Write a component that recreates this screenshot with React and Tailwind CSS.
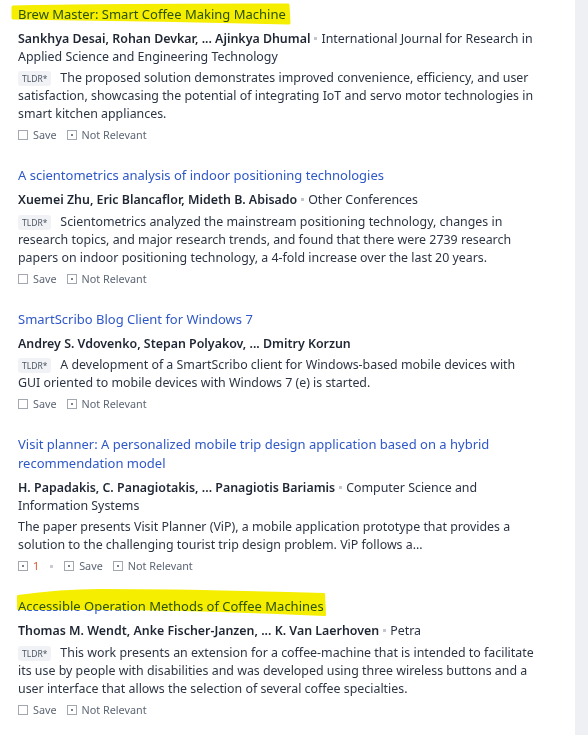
import React from "react";

const papers = [
  {
    title: "Brew Master: Smart Coffee Making Machine",
    authors: "Sankhya Desai, Rohan Devkar, ... Ajinkya Dhumal",
    venue: "International Journal for Research in Applied Science and Engineering Technology",
    tldr: true,
    summary:
      "The proposed solution demonstrates improved convenience, efficiency, and user satisfaction, showcasing the potential of integrating IoT and servo motor technologies in smart kitchen appliances.",
    mark: "a",
  },
  {
    title: "A scientometrics analysis of indoor positioning technologies",
    authors: "Xuemei Zhu, Eric Blancaflor, Mideth B. Abisado",
    venue: "Other Conferences",
    tldr: true,
    summary:
      "Scientometrics analyzed the mainstream positioning technology, changes in research topics, and major research trends, and found that there were 2739 research papers on indoor positioning technology, a 4-fold increase over the last 20 years.",
  },
  {
    title: "SmartScribo Blog Client for Windows 7",
    authors: "Andrey S. Vdovenko, Stepan Polyakov, ... Dmitry Korzun",
    tldr: true,
    summary:
      "A development of a SmartScribo client for Windows-based mobile devices with GUI oriented to mobile devices with Windows 7 (e) is started.",
  },
  {
    title:
      "Visit planner: A personalized mobile trip design application based on a hybrid recommendation model",
    authors: "H. Papadakis, C. Panagiotakis, ... Panagiotis Bariamis",
    venue: "Computer Science and Information Systems",
    tldr: false,
    summary:
      "The paper presents Visit Planner (ViP), a mobile application prototype that provides a solution to the challenging tourist trip design problem. ViP follows a...",
    cites: 1,
  },
  {
    title: "Accessible Operation Methods of Coffee Machines",
    authors: "Thomas M. Wendt, Anke Fischer-Janzen, ... K. Van Laerhoven",
    venue: "Petra",
    tldr: true,
    summary:
      "This work presents an extension for a coffee-machine that is intended to facilitate its use by people with disabilities and was developed using three wireless buttons and a user interface that allows the selection of several coffee specialties.",
    mark: "b",
  },
];

function Box({ dot }) {
  return (
    <span className="inline-flex h-[10px] w-[10px] shrink-0 items-center justify-center border border-[#a3a8b0] bg-white">
      {dot && <span className="h-[2px] w-[2px] bg-[#7b8088]" />}
    </span>
  );
}

// Yellow marker stroke drawn behind the first highlighted title
function MarkA() {
  return (
    <svg
      className="pointer-events-none absolute left-[-8px] top-[-8px]"
      width="290"
      height="32"
      viewBox="0 0 290 32"
    >
      <path
        d="M3 10 C90 8 190 8 278 8 L279 26 C190 24 90 22 3 21 Z"
        fill="#f5ee00"
        stroke="#f5ee00"
        strokeWidth="3"
        strokeLinejoin="round"
      />
    </svg>
  );
}

// Yellow marker stroke drawn behind the last highlighted title
function MarkB() {
  return (
    <svg
      className="pointer-events-none absolute left-[-2px] top-[-10px]"
      width="314"
      height="34"
      viewBox="0 0 314 34"
    >
      <path
        d="M2 9 C30 5 60 3 84 3 C160 3 240 5 308 7 L309 28 C240 25 160 22 84 22 C50 22 25 22 2 22 Z"
        fill="#f5ee00"
        stroke="#f5ee00"
        strokeWidth="2"
        strokeLinejoin="round"
      />
    </svg>
  );
}

function Paper({ p }) {
  return (
    <div className="pb-[23px]">
      <div className="relative">
        {p.mark === "a" && <MarkA />}
        {p.mark === "b" && <MarkB />}
        <a className="relative block text-[13px] leading-[19px] text-[#2f58c8] mix-blend-multiply">
          {p.title}
        </a>
      </div>
      <div className="mt-[6px] text-[12.4px] leading-[17.5px] text-[#2a3344]">
        <span className="font-semibold text-[#1f2633]">{p.authors}</span>
        {p.venue && (
          <>
            <span className="mx-[4px] inline-block h-[3px] w-[3px] translate-y-[-3px] bg-[#c3c7cd]" />
            <span>{p.venue}</span>
          </>
        )}
      </div>
      <p className="mt-[4px] text-[12.4px] leading-[18px] text-[#2d3544]">
        {p.tldr && (
          <span className="mr-[9px] inline-block rounded-[3px] bg-[#f0f2f5] px-[4px] text-[8.5px] leading-[15px] text-[#4b5563]">
            TLDR*
          </span>
        )}
        {p.summary}
      </p>
      <div className="mt-[4px] flex items-center text-[10.8px] leading-[16px] text-[#5d6675]">
        {p.cites && (
          <>
            <Box dot />
            <span className="ml-[5px] text-[#e0542f]">{p.cites}</span>
            <span className="ml-[11px] mr-[11px] h-[3px] w-[3px] bg-[#c8ccd2]" />
          </>
        )}
        <Box dot={!!p.cites} />
        <span className="ml-[5px]">Save</span>
        <span className="ml-[10px] flex">
          <Box dot />
        </span>
        <span className="ml-[5px]">Not Relevant</span>
      </div>
    </div>
  );
}

export default function App() {
  return (
    <div
      className="flex min-h-[735px] w-[588px] bg-white"
      style={{ fontFamily: '"Noto Sans", "Open Sans", Arial, sans-serif' }}
    >
      <main className="min-w-0 flex-1 pl-[18px] pr-[37px] pt-[5px]">
        {papers.map((p) => (
          <Paper key={p.title} p={p} />
        ))}
      </main>
      <aside className="w-[13px] shrink-0 bg-[#eef0f3]" />
    </div>
  );
}
